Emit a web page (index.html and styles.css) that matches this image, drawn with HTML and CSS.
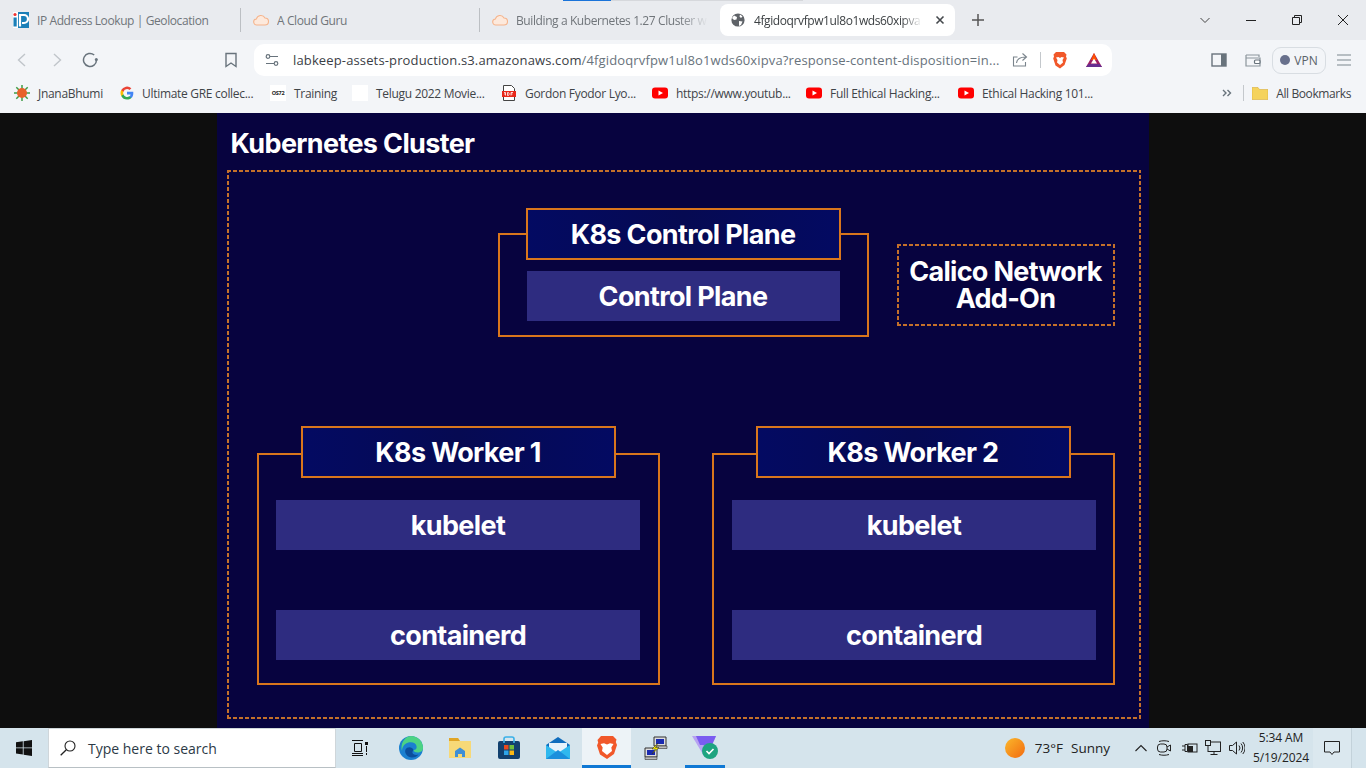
FILE: index.html
```html
<!DOCTYPE html>
<html lang="en">

<head>
  <meta charset="UTF-8">
  <title>Kubernetes Cluster</title>
  <link rel="stylesheet" href="styles.css">
</head>

<body>
  <div class="progress"><span class="progress-done"></span></div>

  <!-- tabs -->
  <div class="tabstrip">
    <div class="tab">
      <svg class="fav" viewBox="0 0 16 16"><rect width="16" height="16" fill="#1a7fb8"/><rect x="0" y="0" width="5" height="16" fill="#fff"/><circle cx="2" cy="2.500" r="1.600" fill="#e33"/><rect x="0.500" y="5.500" width="3.200" height="9" fill="#1a7fb8"/><path d="M7 14.500V3h4a4 4 0 0 1 0 8H9" fill="none" stroke="#fff" stroke-width="2.200"/></svg>
      <span class="tab-text">IP Address Lookup | Geolocation</span>
    </div>
    <div class="tab tab-sep">
      <svg class="fav" viewBox="0 0 16 16"><path d="M4 13a3 3 0 0 1-.6-6A4.600 4.600 0 0 1 12 6a3.500 3.500 0 0 1 0 7z" fill="#fde9dc" stroke="#f5b48c" stroke-width="1.100"/></svg>
      <span class="tab-text">A Cloud Guru</span>
    </div>
    <div class="tab tab-sep">
      <svg class="fav" viewBox="0 0 16 16"><path d="M4 13a3 3 0 0 1-.6-6A4.600 4.600 0 0 1 12 6a3.500 3.500 0 0 1 0 7z" fill="#fde9dc" stroke="#f5b48c" stroke-width="1.100"/></svg>
      <span class="tab-text tab-fade">Building a Kubernetes 1.27 Cluster w</span>
    </div>
    <div class="tab-active">
      <svg class="fav-globe" viewBox="0 0 14 14"><circle cx="7" cy="7" r="6.600" fill="#5f6368"/><path d="M3 2.500l3 1.500-.5 2.500L3 7 1 5zM8 8l3.500.5-1.500 3.500-2 1zM9 1.500l2.500 2L10 5 8.500 3.500z" fill="#fff"/></svg>
      <span class="tab-text tab-text-active">4fgidoqrvfpw1ul8o1wds60xipva</span>
      <svg class="tab-close" viewBox="0 0 10 10"><path d="M1.500 1.500l7 7M8.500 1.500l-7 7" stroke="#45494d" stroke-width="1.600"/></svg>
    </div>
    <svg class="new-tab" viewBox="0 0 12 12"><path d="M6 0v12M0 6h12" stroke="#555" stroke-width="1.500"/></svg>
    <div class="win-controls">
      <svg class="win-btn" viewBox="0 0 12 12"><path d="M1.500 4l4.500 4.500L10.500 4" fill="none" stroke="#444" stroke-width="1"/></svg>
      <svg class="win-btn" viewBox="0 0 12 12"><path d="M1 6.500h10" stroke="#222" stroke-width="1"/></svg>
      <svg class="win-btn" viewBox="0 0 12 12"><path d="M1.500 3.500h7v7h-7zM3.500 3.500v-2h7v7h-2" fill="none" stroke="#222" stroke-width="1"/></svg>
      <svg class="win-btn" viewBox="0 0 12 12"><path d="M1 1l10 10M11 1L1 11" stroke="#222" stroke-width="1"/></svg>
    </div>
  </div>

  <!-- address bar -->
  <div class="toolbar">
    <svg class="tool tool-back" viewBox="0 0 16 16"><path d="M11 2L4.500 8l6.500 6" fill="none" stroke="#c0c5ca" stroke-width="1.400"/></svg>
    <svg class="tool tool-fwd" viewBox="0 0 16 16"><path d="M5 2l6.500 6L5 14" fill="none" stroke="#c0c5ca" stroke-width="1.400"/></svg>
    <svg class="tool tool-reload" viewBox="0 0 16 16"><path d="M14.500 8a6.500 6.500 0 1 1-2.300-5" fill="none" stroke="#68737c" stroke-width="1.500"/><circle cx="14.300" cy="7.500" r="1.500" fill="#68737c"/></svg>
    <svg class="tool tool-mark" viewBox="0 0 16 16"><path d="M3 1.500h10v13l-5-3.500-5 3.500z" fill="none" stroke="#68737c" stroke-width="1.400"/></svg>
    <div class="urlbar">
      <svg class="url-tune" viewBox="0 0 14 14"><path d="M5 3.500h8M1 10.500h8" stroke="#68737c" stroke-width="1.200"/><circle cx="3" cy="3.500" r="1.800" fill="#fff" stroke="#68737c" stroke-width="1.200"/><circle cx="11" cy="10.500" r="1.800" fill="#fff" stroke="#68737c" stroke-width="1.200"/></svg>
      <span class="url-text"><span class="url-host">labkeep-assets-production.s3.amazonaws.com</span>/4fgidoqrvfpw1ul8o1wds60xipva?response-content-disposition=in...</span>
      <svg class="url-share" viewBox="0 0 16 16"><path d="M13.500 10v4h-12V5h4" fill="none" stroke="#7a848c" stroke-width="1.100"/><path d="M4.500 11c.5-4 3.500-6 9-6M10.500 1.500L14.500 5l-4 3.500" fill="none" stroke="#7a848c" stroke-width="1.100"/></svg>
      <span class="url-sep"></span>
      <svg class="url-brave" viewBox="0 0 16 18"><path d="M4 1h8l2.500 2.500-.5 2 .8 2-2.300 6.500L8 17.500 3.500 14.500 1.200 7.500l.8-2-.5-2z" fill="#f1582a"/><path d="M4 6.500l2.500-.5L8 7l1.500-1L12 6.500 10.500 9l.5 2.500L8 14l-3-2.500L5.500 9z" fill="#fff"/></svg>
      <svg class="url-bat" viewBox="0 0 18 16"><path d="M9 1l8 14H1z" fill="#9e1f63"/><path d="M1 15l2.500-3h11L17 15z" fill="#662d91"/><path d="M9 1l3 7H6z" fill="#ff5000"/><path d="M9 6.500l3 5H6z" fill="#fff"/></svg>
    </div>
    <svg class="tool tool-side" viewBox="0 0 16 16"><rect x="1" y="2" width="14" height="12" fill="none" stroke="#68737c" stroke-width="1.400"/><rect x="10" y="2" width="5" height="12" fill="#68737c"/></svg>
    <svg class="tool tool-wallet" viewBox="0 0 16 16"><path d="M1 3h13v2M1 3v11h14V6H1" fill="none" stroke="#8b959c" stroke-width="1.200"/><rect x="9.500" y="8" width="5.500" height="3.500" rx="1" fill="#fff" stroke="#68737c" stroke-width="1.200"/></svg>
    <div class="vpn"><span class="vpn-dot"></span>VPN</div>
    <svg class="tool tool-menu" viewBox="0 0 16 16"><path d="M1 3h14M1 8h14M1 13h14" stroke="#7d878e" stroke-width="1.200"/></svg>
  </div>

  <!-- bookmarks -->
  <div class="bookmarks">
    <div class="bm">
      <svg class="bm-icon" viewBox="0 0 16 16"><g stroke="#3f9c46" stroke-width="1.500"><path d="M8 0v16M0 8h16M2.300 2.300l11.400 11.400M13.700 2.300L2.300 13.700"/></g><circle cx="8" cy="8" r="5" fill="#e8622a"/></svg>
      JnanaBhumi
    </div>
    <div class="bm">
      <svg class="bm-icon bm-icon-g" viewBox="0 0 16 16"><path d="M15.200 8.200c0-.6 0-1-.1-1.500H8v2.900h4.100a3.500 3.500 0 0 1-1.500 2.300v1.900h2.400c1.400-1.300 2.200-3.200 2.200-5.600z" fill="#4285f4"/><path d="M8 15.500c2 0 3.700-.7 5-1.800l-2.400-1.900a4.500 4.500 0 0 1-6.700-2.400H1.400v2A7.500 7.500 0 0 0 8 15.500z" fill="#34a853"/><path d="M3.900 9.400a4.500 4.500 0 0 1 0-2.800v-2H1.400a7.500 7.500 0 0 0 0 6.800z" fill="#fbbc05"/><path d="M8 3.500c1.100 0 2.100.4 2.900 1.100L13 2.500A7.500 7.500 0 0 0 1.400 4.600l2.500 2A4.500 4.500 0 0 1 8 3.500z" fill="#ea4335"/></svg>
      Ultimate GRE collec...
    </div>
    <div class="bm">
      <span class="bm-os">OS72</span>
      Training
    </div>
    <div class="bm">
      <span class="bm-blank"></span>
      Telugu 2022 Movie...
    </div>
    <div class="bm">
      <svg class="bm-icon" viewBox="0 0 16 16"><path d="M2.500.5h8l3 3v12h-11z" fill="#fff" stroke="#444"/><rect x="1" y="6" width="14" height="6" fill="#e8291c"/><path d="M3 7.500h1.500v3M3 9h1.500M6.500 7.500v3M6.500 7.500h1l.8 1.500-.8 1.500h-1M10 10.500v-3h2M10 9h1.500" fill="none" stroke="#fff" stroke-width=".8"/></svg>
      Gordon Fyodor Lyo...
    </div>
    <div class="bm">
      <svg class="bm-icon" viewBox="0 0 16 16"><rect x="0" y="2.500" width="16" height="11" rx="3" fill="#f00"/><path d="M6.500 5.500L11 8l-4.500 2.500z" fill="#fff"/></svg>
      https://www.youtub...
    </div>
    <div class="bm">
      <svg class="bm-icon" viewBox="0 0 16 16"><rect x="0" y="2.500" width="16" height="11" rx="3" fill="#f00"/><path d="M6.500 5.500L11 8l-4.500 2.500z" fill="#fff"/></svg>
      Full Ethical Hacking...
    </div>
    <div class="bm">
      <svg class="bm-icon" viewBox="0 0 16 16"><rect x="0" y="2.500" width="16" height="11" rx="3" fill="#f00"/><path d="M6.500 5.500L11 8l-4.500 2.500z" fill="#fff"/></svg>
      Ethical Hacking 101...
    </div>
    <div class="bm-end">
      <svg class="bm-more" viewBox="0 0 10 10"><path d="M1 2l3 3-3 3M5.500 2l3 3-3 3" fill="none" stroke="#68737c" stroke-width="1.400"/></svg>
      <span class="bm-sep"></span>
      <svg class="bm-icon" viewBox="0 0 16 16"><path d="M0 2.500h6l1.500 2H16v10H0z" fill="#f5d35c" stroke="#d8ae3a" stroke-width=".6"/></svg>
      All Bookmarks
    </div>
  </div>

  <!-- pdf page -->
  <div class="viewer">
    <div class="slide">
      <h1 class="slide-title">Kubernetes Cluster</h1>
      <div class="cluster"></div>

      <div class="group group-cp">
        <div class="group-title">K8s Control Plane</div>
        <div class="block">Control Plane</div>
      </div>

      <div class="addon">Calico Network<br>Add-On</div>

      <div class="group group-worker group-w1">
        <div class="group-title">K8s Worker 1</div>
        <div class="block">kubelet</div>
        <div class="block">containerd</div>
      </div>

      <div class="group group-worker group-w2">
        <div class="group-title">K8s Worker 2</div>
        <div class="block">kubelet</div>
        <div class="block">containerd</div>
      </div>
    </div>
  </div>

  <!-- windows taskbar -->
  <div class="taskbar">
    <svg class="start" viewBox="0 0 16 16"><path d="M0 2.300l6.800-1v6.200H0zM7.600 1.200L16 0v7.500H7.600zM0 8.300h6.800v6.300l-6.800-1zM7.600 8.300H16V16l-8.400-1.200z" fill="#111"/></svg>
    <div class="search">
      <svg class="search-icon" viewBox="0 0 16 16"><circle cx="10" cy="6" r="5" fill="none" stroke="#222" stroke-width="1.100"/><path d="M6.300 9.700L.7 15.300" stroke="#222" stroke-width="1.300"/></svg>
      Type here to search
    </div>
    <svg class="task-view" viewBox="0 0 16 16"><path d="M0 .5h11M0 15.500h11M2.500 3.500h7v8h-7zM0 13.500h11M14.500 6v6M14.500 13v2" fill="none" stroke="#111" stroke-width="1"/><rect x="13" y="2" width="3" height="3" fill="#111"/></svg>

    <div class="apps">
      <div class="app">
        <svg class="app-icon" viewBox="0 0 24 24"><circle cx="12" cy="12" r="12" fill="#1b80d0"/><path d="M12 0a12 12 0 0 1 12 12c0 3-2.500 4.500-5.500 4.500-2.500 0-4-1-4-2.500 2.500 0 3.500-1.500 3-4C17 6 11 5 7 7.500 4 9.500 3 12 3 15 1 9 5 0 12 0z" fill="#4cd384"/><path d="M14.500 14c-1-3-6-4-8-.5-1.500 3.500 2 8 6.500 8 3 0 5-1 6.500-3-4 1.500-8-1-5-4.500z" fill="#0b4f9c"/></svg>
      </div>
      <div class="app">
        <svg class="app-icon" viewBox="0 0 24 24"><path d="M1 2h9l2 3h11v17H1z" fill="#f7d978"/><path d="M1 2h9l2 3H1z" fill="#e0a526"/><path d="M7 21v-6l5-3.500 5 3.500v6h-3v-3h-4v3z" fill="#3f8fd6"/></svg>
      </div>
      <div class="app">
        <svg class="app-icon" viewBox="0 0 24 24"><rect x="1" y="5" width="22" height="18" rx="2" fill="#12406e"/><path d="M7 7V3a2 2 0 0 1 2-2h6a2 2 0 0 1 2 2v4" fill="none" stroke="#3ab0e8" stroke-width="1.600"/><rect x="7" y="9" width="4.500" height="4.500" fill="#e8491d"/><rect x="12.500" y="9" width="4.500" height="4.500" fill="#6fbf3c"/><rect x="7" y="14.500" width="4.500" height="4.500" fill="#2ea4e8"/><rect x="12.500" y="14.500" width="4.500" height="4.500" fill="#fcb813"/></svg>
      </div>
      <div class="app">
        <svg class="app-icon" viewBox="0 0 24 24"><path d="M0 9L12 1l12 8v14H0z" fill="#0f6cbd"/><path d="M3 7h18v8l-9 5-9-5z" fill="#e6f2fb"/><path d="M0 9l12 8 12-8v14H0z" fill="#2fb8ee"/><path d="M0 23l12-9 12 9z" fill="#1a8fdc"/></svg>
      </div>
      <div class="app app-open">
        <svg class="app-icon" viewBox="0 0 24 24"><path d="M6 1h12l3.500 3.500-.7 2.500 1.200 3-3 9L12 24l-7-4.500-3-9 1.200-3-.7-2.500z" fill="#f1582a"/><path d="M5.500 9l3.500-.7L12 9.500l3-1.200 3.500.7-2.200 3.500.7 3.500-5 4-5-4 .7-3.500z" fill="#fff"/></svg>
      </div>
      <div class="app">
        <svg class="app-icon" viewBox="0 0 24 24"><path d="M10 1h12v9H10z" fill="#ddd" stroke="#333"/><path d="M12 3h8v5h-8z" fill="#1a2ab0"/><path d="M1 12h12v9H1z" fill="#ddd" stroke="#333"/><path d="M3 14h8v5H3z" fill="#1a2ab0"/><path d="M1 21h12v2.500H1zM12 10h11v2.500H12z" fill="#bbb" stroke="#333" stroke-width=".6"/><path d="M14 7l-6 6h3.500L8 18l7-6.500h-3.500z" fill="#fff200" stroke="#222" stroke-width=".5"/></svg>
      </div>
      <div class="app app-last">
        <svg class="app-icon app-icon-last" viewBox="0 0 26 24"><path d="M0 1h24l-4 9-8 11z" fill="#b7a2f2"/><path d="M4 1h20l-4 9H8z" fill="#7a5cf0"/><circle cx="18" cy="16" r="8" fill="#1ea480"/><path d="M14.500 16l2.500 2.500 4.500-4.500" fill="none" stroke="#fff" stroke-width="1.600"/></svg>
      </div>
    </div>

    <div class="tray">
      <span class="sun"></span>
      <span class="temp">73°F</span>
      <span class="sky">Sunny</span>
      <svg class="tray-chev" viewBox="0 0 12 8"><path d="M.5 7L6 1.500 11.500 7" fill="none" stroke="#222" stroke-width="1.100"/></svg>
      <svg class="tray-icon" viewBox="0 0 14 16"><path d="M2 1.500c3-1 7-1 10 0M2 14.500c3 1 7 1 10 0" fill="none" stroke="#222"/><rect x=".5" y="4" width="9.500" height="8" rx="3" fill="none" stroke="#222"/><path d="M10 7l3.500-2v6L10 9" fill="none" stroke="#222"/></svg>
      <svg class="tray-icon tray-batt" viewBox="0 0 16 14"><path d="M0 5h3M0 9h3M3 3.500h2.500v7H3z" fill="none" stroke="#222"/><rect x="6" y="3" width="9" height="8" fill="none" stroke="#222"/><rect x="6" y="5" width="5" height="6" fill="#222"/></svg>
      <svg class="tray-icon tray-net" viewBox="0 0 16 16"><rect x="3" y="2" width="12.500" height="9.500" fill="none" stroke="#222"/><rect x=".5" y=".5" width="5" height="5" fill="#d6e4eb" stroke="#222"/><path d="M9 11.500v3M5.500 14.500h7" stroke="#222"/></svg>
      <svg class="tray-icon tray-vol" viewBox="0 0 16 16"><path d="M.5 5.500h3L7.500 2v12l-4-3.500h-3z" fill="none" stroke="#222"/><path d="M10 5.500a4 4 0 0 1 0 5M12 3.500a7 7 0 0 1 0 9M13.800 2a9 9 0 0 1 0 12" fill="none" stroke="#222"/></svg>
      <div class="clock"><span>5:34 AM</span><span>5/19/2024</span></div>
      <div class="notify">
        <svg class="notify-icon" viewBox="0 0 16 15"><path d="M.5.500h15v10.500H10L8 13.500 6 11H.5z" fill="none" stroke="#222"/></svg>
      </div>
    </div>
  </div>
</body>

</html>
```

FILE: styles.css
```css
* {
  box-sizing: border-box;
}

body {
  margin: 0;
  width: 1366px;
  height: 768px;
  overflow: hidden;
  display: flex;
  flex-direction: column;
  position: relative;
  font-family: "Open Sans", "Noto Sans", sans-serif;
  font-size: 12px;
  background: #0e0e0e;
}

.progress {
  position: absolute;
  left: 563px;
  top: 0;
  width: 240px;
  height: 1px;
  background: #d6d8dc;
}

.progress-done {
  display: block;
  width: 48px;
  height: 1px;
  background: #1a73d9;
}

/* tabs */
.tabstrip {
  height: 40px;
  flex: none;
  background: #e9ebef;
  display: flex;
  align-items: center;
  padding-left: 1px;
}

.tab {
  width: 239px;
  height: 24px;
  display: flex;
  align-items: center;
  padding-left: 12px;
  color: #70757a;
}

.tab-sep {
  border-left: 1px solid #bcbfc3;
}

.fav {
  width: 16px;
  height: 16px;
  flex: none;
  margin-right: 8px;
}

.tab-text {
  white-space: nowrap;
  letter-spacing: -0.4px;
  overflow: hidden;
}

.tab-fade {
  width: 192px;
  -webkit-mask-image: linear-gradient(90deg, #000 85%, transparent);
  mask-image: linear-gradient(90deg, #000 85%, transparent);
}

.tab-active {
  width: 235px;
  height: 32px;
  margin-left: 2px;
  background: #fff;
  border-radius: 8px;
  display: flex;
  align-items: center;
  padding-left: 11px;
  color: #3c4043;
}

.fav-globe {
  width: 14px;
  height: 14px;
  flex: none;
  margin-right: 9px;
}

.tab-text-active {
  width: 168px;
  -webkit-mask-image: linear-gradient(90deg, #000 88%, transparent);
  mask-image: linear-gradient(90deg, #000 88%, transparent);
}

.tab-close {
  width: 10px;
  height: 10px;
  margin-left: 13px;
}

.new-tab {
  width: 12px;
  height: 12px;
  margin-left: 17px;
}

.win-controls {
  margin-left: auto;
  display: flex;
  gap: 34px;
  padding-right: 17px;
}

.win-btn {
  width: 12px;
  height: 12px;
}

/* address bar */
.toolbar {
  height: 40px;
  flex: none;
  background: #f3f5f8;
  display: flex;
  align-items: center;
}

.tool {
  width: 16px;
  height: 16px;
  flex: none;
}

.tool-back {
  margin-left: 14px;
}

.tool-fwd {
  margin-left: 19px;
}

.tool-reload {
  margin-left: 17px;
}

.tool-mark {
  margin-left: 125px;
}

.urlbar {
  width: 858px;
  height: 32px;
  margin-left: 15px;
  background: #fff;
  border-radius: 10px;
  display: flex;
  align-items: center;
  padding-left: 11px;
}

.url-tune {
  width: 14px;
  height: 14px;
  flex: none;
}

.url-text {
  width: 707px;
  margin-left: 14px;
  white-space: nowrap;
  overflow: hidden;
  font-size: 13px;
  letter-spacing: 0.14px;
  color: #68737c;
}

.url-host {
  color: #3b4046;
}

.url-share {
  width: 16px;
  height: 16px;
  margin-left: 12px;
}

.url-sep {
  width: 1px;
  height: 16px;
  margin-left: 12px;
  background: #c4c8cc;
}

.url-brave {
  width: 16px;
  height: 18px;
  margin-left: 11px;
}

.url-bat {
  width: 18px;
  height: 16px;
  margin-left: 17px;
}

.tool-side {
  margin-left: 99px;
}

.tool-wallet {
  margin-left: 18px;
}

.vpn {
  width: 54px;
  height: 27px;
  margin-left: 11px;
  border: 1px solid #d8dde2;
  border-radius: 9px;
  display: flex;
  align-items: center;
  justify-content: center;
  gap: 4px;
  color: #596269;
}

.vpn-dot {
  width: 10px;
  height: 10px;
  border-radius: 50%;
  background: #68708c;
}

.tool-menu {
  margin-left: 10px;
}

/* bookmarks */
.bookmarks {
  height: 33px;
  flex: none;
  background: #f3f5f8;
  display: grid;
  grid-template-columns: 106px 150px 82px 149px 151px 154px 152px 170px 1fr;
  align-items: center;
  padding: 0 0 7px 14px;
  color: #3f4448;
  white-space: nowrap;
}

.bm {
  display: flex;
  align-items: center;
  letter-spacing: -0.3px;
}

.bm-icon {
  width: 16px;
  height: 16px;
  flex: none;
  margin-right: 8px;
}

.bm-icon-g {
  width: 14px;
  height: 14px;
}

.bm-os {
  width: 16px;
  height: 16px;
  margin-right: 8px;
  background: #fff;
  color: #222;
  font-size: 5.500px;
  font-weight: 700;
  line-height: 16px;
  text-align: center;
}

.bm-blank {
  width: 16px;
  height: 16px;
  margin-right: 8px;
  background: #fff;
}

.bm-end {
  display: flex;
  align-items: center;
  justify-content: flex-end;
  padding-right: 15px;
  letter-spacing: -0.4px;
}

.bm-more {
  width: 10px;
  height: 10px;
  margin-right: 11px;
}

.bm-sep {
  width: 1px;
  height: 16px;
  margin-right: 8px;
  background: #c4c8cc;
}

/* pdf page */
.viewer {
  flex: 1;
  display: flex;
  justify-content: center;
  padding-right: 1px;
  background: #0e0e0e;
}

.slide {
  width: 932px;
  position: relative;
  background: #07033f;
  color: #fff;
  font-family: Inter, "Liberation Sans", sans-serif;
  font-weight: 700;
}

.slide-title {
  margin: 0;
  padding: 14px 0 0 14px;
  font-size: 27px;
  line-height: 33px;
  font-weight: 700;
  letter-spacing: -0.65px;
}

/* short dashes, a css dashed border comes out too long */
.cluster,
.addon {
  background:
    repeating-linear-gradient(90deg, #c4702a 0 4px, transparent 4px 6px) top / 100% 2px no-repeat,
    repeating-linear-gradient(90deg, #c4702a 0 4px, transparent 4px 6px) bottom / 100% 2px no-repeat,
    repeating-linear-gradient(0deg, #c4702a 0 4px, transparent 4px 6px) left / 2px 100% no-repeat,
    repeating-linear-gradient(0deg, #c4702a 0 4px, transparent 4px 6px) right / 2px 100% no-repeat;
}

.cluster {
  position: absolute;
  left: 10px;
  top: 57px;
  width: 914px;
  height: 549px;
}

.group {
  position: absolute;
  border: 2px solid #d9761c;
  display: flex;
  flex-direction: column;
  align-items: center;
}

.group-title,
.block {
  display: flex;
  align-items: center;
  justify-content: center;
  font-size: 27px;
  letter-spacing: -0.65px;
}

.group-title {
  position: absolute;
  width: 315px;
  height: 52px;
  background: linear-gradient(90deg, #030a62, #060a52 50%, #030a62);
  border: 2px solid #d9761c;
}

.block {
  height: 50px;
  background: #2e2c80;
}

.group-cp {
  left: 281px;
  top: 120px;
  width: 371px;
  height: 104px;
  padding-top: 36px;
}

.group-cp .group-title {
  top: -27px;
  left: 26px;
}

.group-cp .block {
  width: 313px;
}

.group-worker {
  top: 340px;
  width: 403px;
  height: 232px;
  padding-top: 45px;
  gap: 60px;
}

.group-worker .group-title {
  top: -29px;
  left: 42px;
  height: 52px;
}

.group-worker .block {
  width: 364px;
}

.group-w1 {
  left: 40px;
}

.group-w2 {
  left: 495px;
}

.group-w2 .block {
  margin-left: 2px;
}

.addon {
  position: absolute;
  left: 680px;
  top: 131px;
  width: 218px;
  height: 82px;
  display: flex;
  align-items: center;
  justify-content: center;
  text-align: center;
  font-size: 27px;
  line-height: 27px;
  letter-spacing: -0.7px;
}

/* windows taskbar */
.taskbar {
  height: 40px;
  flex: none;
  background: #d5e4ec;
  display: flex;
  align-items: center;
  color: #222;
}

.start {
  width: 16px;
  height: 16px;
  margin-left: 16px;
}

.search {
  width: 288px;
  height: 40px;
  margin-left: 16px;
  background: #fff;
  border: 1px solid #cfd6da;
  border-bottom-color: #b8c0c4;
  display: flex;
  align-items: center;
  padding-left: 11px;
  font-size: 14px;
  color: #2c3a46;
}

.search-icon {
  width: 16px;
  height: 16px;
  margin-right: 12px;
}

.task-view {
  width: 16px;
  height: 16px;
  margin-left: 16px;
}

.apps {
  display: flex;
  height: 40px;
  margin-left: 18px;
}

.app {
  width: 49px;
  height: 40px;
  display: flex;
  align-items: center;
  justify-content: center;
}

.app-icon {
  width: 24px;
  height: 24px;
}

.app-open {
  background: #edf3f7;
  border-bottom: 3px solid #0f78d4;
}

.app-last {
  width: 40px;
  margin-left: 5px;
  border-bottom: 3px solid #0f78d4;
}

.app-icon-last {
  width: 26px;
}

.tray {
  margin-left: auto;
  height: 40px;
  display: flex;
  align-items: center;
  font-size: 14px;
  padding-right: 14px;
}

.sun {
  width: 20px;
  height: 20px;
  border-radius: 50%;
  background: linear-gradient(135deg, #fbb82b, #f26a10);
}

.temp {
  margin-left: 10px;
  font-size: 13.500px;
}

.sky {
  margin-left: 8px;
  font-size: 13.500px;
}

.tray-chev {
  width: 12px;
  height: 8px;
  margin-left: 25px;
}

.tray-icon {
  width: 14px;
  height: 16px;
  margin-left: 10px;
}

.tray-batt {
  width: 16px;
  margin-left: 11px;
}

.tray-net {
  width: 16px;
  margin-left: 7px;
}

.tray-vol {
  width: 16px;
  margin-left: 8px;
}

.clock {
  width: 64px;
  margin-left: 4px;
  display: flex;
  flex-direction: column;
  align-items: center;
  font-size: 12px;
  letter-spacing: -0.1px;
  line-height: 20px;
}

.notify {
  width: 39px;
  height: 40px;
  background: #dbe8ef;
  border-right: 1px solid #c3d2da;
  display: flex;
  align-items: center;
  justify-content: center;
}

.notify-icon {
  width: 16px;
  height: 15px;
}
```
